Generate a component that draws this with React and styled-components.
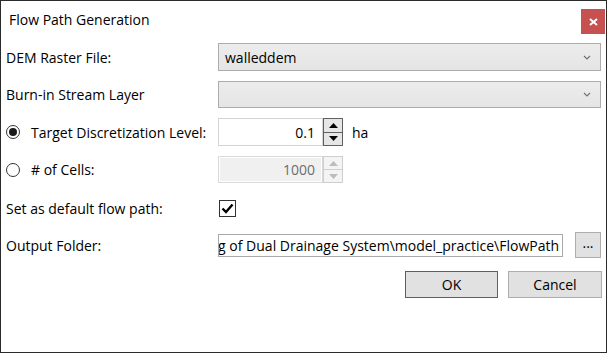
import React from "react";
import styled, { createGlobalStyle } from "styled-components";

const Global = createGlobalStyle`
  html, body {
    margin: 0;
    padding: 0;
    background: #ffffff;
  }
  body {
    font-family: "Open Sans", "Noto Sans", sans-serif;
    color: #000;
  }
`;

const Window = styled.div`
  box-sizing: border-box;
  width: 607px;
  height: 353px;
  border: 1px solid #2b2b2b;
  background: #fff;
  display: flex;
  flex-direction: column;
`;

const TitleBar = styled.div`
  height: 38px;
  display: flex;
  align-items: flex-start;
  justify-content: space-between;
  padding-left: 8px;
  padding-right: 1px;
`;

const Title = styled.div`
  font-size: 14px;
  line-height: 38px;
`;

const CloseButton = styled.div`
  width: 24px;
  height: 25px;
  margin-top: 8px;
  background: #c75050;
  display: flex;
  align-items: center;
  justify-content: center;
`;

const Form = styled.div`
  padding: 4px 5px 0 5px;
  display: flex;
  flex-direction: column;
`;

const Row = styled.div`
  display: flex;
  align-items: center;
  height: ${(p) => p.$h}px;
  margin-top: ${(p) => p.$gap || 0}px;
`;

const Label = styled.div`
  width: 212px;
  flex: none;
  display: flex;
  align-items: center;
  gap: 11px;
  font-size: 14px;
  white-space: nowrap;
`;

const Select = styled.div`
  box-sizing: border-box;
  flex: 1;
  height: 100%;
  border: 1px solid #acacac;
  background: linear-gradient(#ececec, #e5e5e5);
  display: flex;
  align-items: center;
  justify-content: space-between;
  padding: 0 9px 0 6px;
  font-size: 14px;
`;

const Radio = styled.span`
  box-sizing: border-box;
  width: 14px;
  height: 14px;
  border-radius: 50%;
  border: 1px solid #333;
  display: flex;
  align-items: center;
  justify-content: center;
  &::after {
    content: "";
    width: 8px;
    height: 8px;
    border-radius: 50%;
    background: ${(p) => (p.$checked ? "#1a1a1a" : "transparent")};
  }
`;

const NumberBox = styled.div`
  box-sizing: border-box;
  width: 105px;
  height: 100%;
  border: 1px solid ${(p) => (p.$disabled ? "#d9d9d9" : "#d4d4d4")};
  background: ${(p) => (p.$disabled ? "#f0f0f0" : "#fff")};
  box-shadow: ${(p) => (p.$disabled ? "inset 0 0 0 1px #fff" : "none")};
  color: ${(p) => (p.$disabled ? "#6d6d6d" : "#000")};
  display: flex;
  align-items: center;
  justify-content: flex-end;
  padding-right: 7px;
  font-size: 14px;
`;

const Spinner = styled.div`
  width: 20px;
  height: 100%;
  display: flex;
  flex-direction: column;
`;

const SpinHalf = styled.div`
  box-sizing: border-box;
  flex: 1;
  border: 1px solid ${(p) => (p.$disabled ? "#cfcfcf" : "#606060")};
  border-top-width: ${(p) => (p.$bottom ? 0 : 1)}px;
  background: ${(p) => (p.$disabled ? "#f4f4f4" : "#e6e6e6")};
  display: flex;
  align-items: center;
  justify-content: center;
`;

const Unit = styled.span`
  margin-left: 9px;
  font-size: 14px;
`;

const CheckBox = styled.div`
  box-sizing: border-box;
  width: 17px;
  height: 17px;
  margin-left: 1px;
  border: 1px solid #333;
  display: flex;
  align-items: center;
  justify-content: center;
`;

const PathField = styled.div`
  box-sizing: border-box;
  width: 346px;
  height: 23px;
  border: 1px solid #a9a9a9;
  overflow: hidden;
  display: flex;
  justify-content: flex-end;
  align-items: center;
  padding-right: 3px;
  font-size: 14px;
  white-space: nowrap;
`;

const Button = styled.div`
  box-sizing: border-box;
  width: ${(p) => p.$w}px;
  height: 100%;
  background: #e1e1e1;
  border: 1px solid ${(p) => (p.$primary ? "#0078d7" : "#adadad")};
  display: flex;
  align-items: center;
  justify-content: center;
  font-size: 14px;
`;

const BrowseButton = styled(Button)`
  margin-left: 12px;
  padding-bottom: 5px;
`;

const ButtonRow = styled(Row)`
  justify-content: flex-end;
  gap: 10px;
  margin-right: -1px;
`;

const Chevron = () => (
  <svg width="8" height="5" viewBox="0 0 8 5">
    <polyline points="1,1 4,4 7,1" fill="none" stroke="#707070" strokeWidth="1.1" />
  </svg>
);

const Arrow = ({ up, color }) => (
  <svg width="9" height="5" viewBox="0 0 9 5">
    <polygon points={up ? "0,5 4.5,0 9,5" : "0,0 4.5,5 9,0"} fill={color} />
  </svg>
);

const Spin = ({ disabled }) => {
  const c = disabled ? "#bdbdbd" : "#000";
  return (
    <Spinner>
      <SpinHalf $disabled={disabled}>
        <Arrow up color={c} />
      </SpinHalf>
      <SpinHalf $disabled={disabled} $bottom>
        <Arrow color={c} />
      </SpinHalf>
    </Spinner>
  );
};

const App = () => (
  <>
    <Global />
    <Window>
      <TitleBar>
        <Title>Flow Path Generation</Title>
        <CloseButton>
          <svg width="9" height="8" viewBox="0 0 9 8">
            <path d="M1 1 L8 7 M8 1 L1 7" stroke="#fff" strokeWidth="2" />
          </svg>
        </CloseButton>
      </TitleBar>
      <Form>
        <Row $h={28}>
          <Label>DEM Raster File:</Label>
          <Select>
            <span>walleddem</span>
            <Chevron />
          </Select>
        </Row>
        <Row $h={27} $gap={10}>
          <Label>Burn-in Stream Layer</Label>
          <Select>
            <span />
            <Chevron />
          </Select>
        </Row>
        <Row $h={28} $gap={10}>
          <Label>
            <Radio $checked />
            Target Discretization Level:
          </Label>
          <NumberBox>0.1</NumberBox>
          <Spin />
          <Unit>ha</Unit>
        </Row>
        <Row $h={27} $gap={10}>
          <Label>
            <Radio />
            # of Cells:
          </Label>
          <NumberBox $disabled>1000</NumberBox>
          <Spin disabled />
        </Row>
        <Row $h={28} $gap={11}>
          <Label>Set as default flow path:</Label>
          <CheckBox>
            <svg width="13" height="11" viewBox="0 0 13 11">
              <polyline points="1.5,5.5 5,9 11.5,1.5" fill="none" stroke="#000" strokeWidth="2.4" />
            </svg>
          </CheckBox>
        </Row>
        <Row $h={26} $gap={10}>
          <Label>Output Folder:</Label>
          <PathField>ng of Dual Drainage System\model_practice\FlowPath</PathField>
          <BrowseButton $w={26}>...</BrowseButton>
        </Row>
        <ButtonRow $h={27} $gap={13}>
          <Button $w={93} $primary>
            OK
          </Button>
          <Button $w={94}>Cancel</Button>
        </ButtonRow>
      </Form>
    </Window>
  </>
);

export default App;
